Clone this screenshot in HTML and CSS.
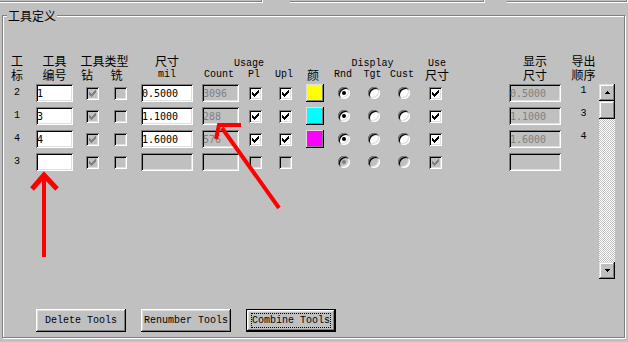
FILE: index.html
```html
<!DOCTYPE html>
<html lang="zh">
    <head>
        <meta charset="UTF-8" />
        <title>工具定义</title>
        <link rel="stylesheet" href="styles.css">
    </head>
    <body>
        <div class="topbar">
            <span class="seg seg-a"></span>
            <span class="seg seg-b"></span>
            <span class="seg seg-c"></span>
        </div>
        <div class="group">
            <div class="group-title">工具定义</div>
            <div class="tools">
                <div class="head head-a">
                    <span class="h c-lbl">工</span>
                    <span class="h c-num">工具</span>
                    <span class="h c-type">工具类型</span>
                    <span class="h c-size">尺寸</span>
                    <span class="h lat c-usage">Usage</span>
                    <span class="h lat c-display">Display</span>
                    <span class="h lat c-use">Use</span>
                    <span class="h c-disp">显示</span>
                    <span class="h c-order">导出</span>
                </div>
                <div class="head head-b">
                    <span class="h c-lbl">标</span>
                    <span class="h c-num">编号</span>
                    <span class="h c-drill">钻</span>
                    <span class="h c-mill">铣</span>
                    <span class="h lat c-size">mil</span>
                    <span class="h lat c-count">Count</span>
                    <span class="h lat c-pl">Pl</span>
                    <span class="h lat c-upl">Upl</span>
                    <span class="h c-color">颜</span>
                    <span class="h lat c-rnd">Rnd</span>
                    <span class="h lat c-tgt">Tgt</span>
                    <span class="h lat c-cust">Cust</span>
                    <span class="h c-use">尺寸</span>
                    <span class="h c-disp">尺寸</span>
                    <span class="h c-order">顺序</span>
                </div>

                <div class="row r1">
                    <span class="num c-lbl">2</span>
                    <input class="field c-num" value="1">
                    <span class="check dis c-drill"><svg viewBox="0 0 7 7" width="7" height="7"><path d="M0 2H1V3H2V4H3V3H4V2H5V1H6V0H7V3H6V4H5V5H4V6H3V7H2V6H1V5H0Z"/></svg></span>
                    <span class="check dis c-mill"></span>
                    <input class="field wide c-size" value="0.5000">
                    <input class="field c-count" value="3096" disabled>
                    <span class="check c-pl"><svg viewBox="0 0 7 7" width="7" height="7"><path d="M0 2H1V3H2V4H3V3H4V2H5V1H6V0H7V3H6V4H5V5H4V6H3V7H2V6H1V5H0Z"/></svg></span>
                    <span class="check c-upl"><svg viewBox="0 0 7 7" width="7" height="7"><path d="M0 2H1V3H2V4H3V3H4V2H5V1H6V0H7V3H6V4H5V5H4V6H3V7H2V6H1V5H0Z"/></svg></span>
                    <span class="swatch yellow c-color"></span>
                    <span class="radio on c-rnd"></span>
                    <span class="radio c-tgt"></span>
                    <span class="radio c-cust"></span>
                    <span class="check c-use"><svg viewBox="0 0 7 7" width="7" height="7"><path d="M0 2H1V3H2V4H3V3H4V2H5V1H6V0H7V3H6V4H5V5H4V6H3V7H2V6H1V5H0Z"/></svg></span>
                    <input class="field wide c-disp" value="0.5000" disabled>
                    <span class="order c-order">1</span>
                </div>
                <div class="row r2">
                    <span class="num c-lbl">1</span>
                    <input class="field c-num" value="3">
                    <span class="check dis c-drill"><svg viewBox="0 0 7 7" width="7" height="7"><path d="M0 2H1V3H2V4H3V3H4V2H5V1H6V0H7V3H6V4H5V5H4V6H3V7H2V6H1V5H0Z"/></svg></span>
                    <span class="check dis c-mill"></span>
                    <input class="field wide c-size" value="1.1000">
                    <input class="field c-count" value="288" disabled>
                    <span class="check c-pl"><svg viewBox="0 0 7 7" width="7" height="7"><path d="M0 2H1V3H2V4H3V3H4V2H5V1H6V0H7V3H6V4H5V5H4V6H3V7H2V6H1V5H0Z"/></svg></span>
                    <span class="check c-upl"><svg viewBox="0 0 7 7" width="7" height="7"><path d="M0 2H1V3H2V4H3V3H4V2H5V1H6V0H7V3H6V4H5V5H4V6H3V7H2V6H1V5H0Z"/></svg></span>
                    <span class="swatch cyan c-color"></span>
                    <span class="radio on c-rnd"></span>
                    <span class="radio c-tgt"></span>
                    <span class="radio c-cust"></span>
                    <span class="check c-use"><svg viewBox="0 0 7 7" width="7" height="7"><path d="M0 2H1V3H2V4H3V3H4V2H5V1H6V0H7V3H6V4H5V5H4V6H3V7H2V6H1V5H0Z"/></svg></span>
                    <input class="field wide c-disp" value="1.1000" disabled>
                    <span class="order c-order">3</span>
                </div>
                <div class="row r3">
                    <span class="num c-lbl">4</span>
                    <input class="field c-num" value="4">
                    <span class="check dis c-drill"><svg viewBox="0 0 7 7" width="7" height="7"><path d="M0 2H1V3H2V4H3V3H4V2H5V1H6V0H7V3H6V4H5V5H4V6H3V7H2V6H1V5H0Z"/></svg></span>
                    <span class="check dis c-mill"></span>
                    <input class="field wide c-size" value="1.6000">
                    <input class="field c-count" value="576" disabled>
                    <span class="check c-pl"><svg viewBox="0 0 7 7" width="7" height="7"><path d="M0 2H1V3H2V4H3V3H4V2H5V1H6V0H7V3H6V4H5V5H4V6H3V7H2V6H1V5H0Z"/></svg></span>
                    <span class="check c-upl"><svg viewBox="0 0 7 7" width="7" height="7"><path d="M0 2H1V3H2V4H3V3H4V2H5V1H6V0H7V3H6V4H5V5H4V6H3V7H2V6H1V5H0Z"/></svg></span>
                    <span class="swatch magenta c-color"></span>
                    <span class="radio on c-rnd"></span>
                    <span class="radio c-tgt"></span>
                    <span class="radio c-cust"></span>
                    <span class="check c-use"><svg viewBox="0 0 7 7" width="7" height="7"><path d="M0 2H1V3H2V4H3V3H4V2H5V1H6V0H7V3H6V4H5V5H4V6H3V7H2V6H1V5H0Z"/></svg></span>
                    <input class="field wide c-disp" value="1.6000" disabled>
                    <span class="order c-order">4</span>
                </div>
                <div class="row r4">
                    <span class="num c-lbl">3</span>
                    <input class="field c-num" value="">
                    <span class="check dis c-drill"><svg viewBox="0 0 7 7" width="7" height="7"><path d="M0 2H1V3H2V4H3V3H4V2H5V1H6V0H7V3H6V4H5V5H4V6H3V7H2V6H1V5H0Z"/></svg></span>
                    <span class="check dis c-mill"></span>
                    <input class="field wide c-size" value="" disabled>
                    <input class="field c-count" value="" disabled>
                    <span class="check dis c-pl"></span>
                    <span class="check dis c-upl"></span>
                    <span class="radio dis on c-rnd"></span>
                    <span class="radio dis c-tgt"></span>
                    <span class="radio dis c-cust"></span>
                    <span class="check dis c-use"><svg viewBox="0 0 7 7" width="7" height="7"><path d="M0 2H1V3H2V4H3V3H4V2H5V1H6V0H7V3H6V4H5V5H4V6H3V7H2V6H1V5H0Z"/></svg></span>
                    <input class="field wide c-disp" value="" disabled>
                </div>

                <div class="scroll c-scroll">
                    <span class="sb-btn"><svg viewBox="0 0 5 3" width="5" height="3"><path d="M2 0H3V1H4V2H5V3H0V2H1V1H2Z"/></svg></span>
                    <span class="sb-thumb"></span>
                    <span class="sb-track"></span>
                    <span class="sb-btn"><svg viewBox="0 0 5 3" width="5" height="3"><path d="M0 0H5V1H4V2H3V3H2V2H1V1H0Z"/></svg></span>
                </div>
            </div>

            <div class="actions">
                <button class="btn">Delete Tools</button>
                <button class="btn">Renumber Tools</button>
                <button class="btn btn-default"><span class="focus">Combine Tools</span></button>
            </div>
        </div>

        <!-- 빨간 화살표 표시 -->
        <svg class="marks" viewBox="0 0 628 342" width="628" height="342">
            <g stroke="#f00" fill="none">
                <path d="M44 257V178" stroke-width="4"/>
                <path d="M32 189L44 175L57 189" stroke-width="5"/>
                <path d="M279 208L222 128" stroke-width="4"/>
                <path d="M241 125H219L216 139" stroke-width="4"/>
            </g>
        </svg>
    </body>
</html>
```

FILE: styles.css
```css
* {
    box-sizing: border-box;
}
body {
    margin: 0;
    width: 628px;
    height: 342px;
    overflow: hidden;
    position: relative;
    background-color: #c0c0c0;
    font-family: "Liberation Mono", "DejaVu Sans Mono", monospace;
    font-size: 10px;
    color: #000;
}
.topbar {
    display: flex;
    height: 3px;
}
.seg {
    display: block;
    height: 3px;
    border-bottom: 1px solid #fff;
    border-right: 1px solid #fff;
    box-shadow: inset -1px -1px #808080;
}
.seg-a {
    width: 263px;
    margin-right: 27px;
}
.seg-b {
    width: 195px;
    margin-right: 22px;
}
.seg-c {
    flex: 1;
}
.group {
    margin: 12px 3px 0 2px;
    height: 323px;
    border: 1px solid #808080;
    box-shadow: inset 1px 1px #fff, 1px 1px #fff;
}
.group-title {
    width: fit-content;
    margin: -8px 0 0 4px;
    padding: 0 1px;
    background-color: #c0c0c0;
    font-family: "Noto Sans CJK SC", sans-serif;
    font-size: 12px;
    line-height: 15px;
}
.tools {
    display: grid;
    margin: 30px 0 0 1px;
    grid-template-columns:
        [lbl] 26px 6px [num] 37px 13px [drill] 13px 15px [mill] 13px 14px
        [size] 52px 9px [count] 37px 10px [pl] 13px 17px [upl] 13px 14px
        [color] 18px 14px [rnd] 12px 18px [tgt] 12px 18px [cust] 12px 19px
        [use] 13px 67px [disp] 52px 11px [order] 23px 4px [scroll] 16px;
    grid-template-rows: 14px 17px repeat(4, 23px) auto;
}
.head,
.row {
    display: contents;
}
.h {
    justify-self: center;
    line-height: 13px;
    font-family: "Noto Sans CJK SC", sans-serif;
    font-size: 12px;
    white-space: nowrap;
}
.h.lat {
    font-family: "Liberation Mono", monospace;
    font-size: 10px;
}
.head-a > .h {
    grid-row: 1;
    align-self: end;
}
.head-a > .h.lat {
    margin-bottom: -3px;
}
.head-b > .h {
    grid-row: 2;
    align-self: start;
    margin-top: 1px;
}
.r1 > * { grid-row: 3; }
.r2 > * { grid-row: 4; }
.r3 > * { grid-row: 5; }
.r4 > * { grid-row: 6; }
.row > * {
    align-self: start;
}

/* columns */
.c-lbl { grid-column: lbl / span 1; }
.c-num { grid-column: num / span 1; }
.c-drill { grid-column: drill / span 1; }
.c-mill { grid-column: mill / span 1; }
.c-type { grid-column: drill / span 3; }
.c-size { grid-column: size / span 1; }
.c-count { grid-column: count / span 1; }
.c-usage { grid-column: count / span 5; }
.c-pl { grid-column: pl / span 1; }
.c-upl { grid-column: upl / span 1; }
.c-color { grid-column: color / span 1; }
.c-rnd { grid-column: rnd / span 1; }
.c-tgt { grid-column: tgt / span 1; }
.c-cust { grid-column: cust / span 1; }
.c-display { grid-column: rnd / span 5; }
.c-use { grid-column: use / span 1; }
.c-disp { grid-column: disp / span 1; }
.c-order { grid-column: order / span 1; }
.c-scroll { grid-column: scroll / span 1; }

/* header nudges */
.h.c-type { padding-right: 4px; }
.h.c-usage { padding-left: 4px; }
.h.c-display { padding-right: 3px; }
.h.c-drill { padding-right: 11px; }
.h.c-mill { padding-right: 8px; }
.h.c-count,
.h.c-pl,
.h.c-upl,
.h.c-tgt { padding-right: 3px; }
.h.c-color,
.h.c-cust { padding-right: 4px; }
.h.c-rnd { padding-right: 2px; }
.h.c-use { padding-left: 3px; }

.num {
    justify-self: center;
    line-height: 18px;
}
.order {
    justify-self: center;
    line-height: 14px;
}
.field {
    width: 37px;
    height: 18px;
    margin: 0;
    border: 0;
    padding: 0 0 0 1px;
    outline: none;
    background-color: #fff;
    font-family: "DejaVu Sans Mono", monospace;
    font-size: 10px;
    color: #000;
    box-shadow: inset 1px 1px #808080, inset -1px -1px #fff, inset 2px 2px #000, inset -2px -2px #dfdfdf;
}
.field.wide {
    width: 52px;
}
.field:disabled {
    background-color: #c0c0c0;
    color: #808080;
}
.check {
    display: flex;
    justify-content: center;
    align-items: center;
    width: 13px;
    height: 13px;
    margin-top: 3px;
    background-color: #fff;
    color: #000;
    box-shadow: inset 1px 1px #808080, inset -1px -1px #fff, inset 2px 2px #000, inset -2px -2px #dfdfdf;
}
.check.dis {
    background-color: #c0c0c0;
    color: #808080;
}
.check svg {
    display: block;
    fill: currentColor;
    shape-rendering: crispEdges;
}
.radio {
    display: block;
    width: 12px;
    height: 12px;
    margin-top: 3px;
    border-radius: 50%;
    background-color: #fff;
    box-shadow: inset 1px 1px #808080, inset -1px -1px #fff, inset 2px 2px #000, inset -2px -2px #dfdfdf;
}
.radio.on::after {
    content: "";
    display: block;
    width: 4px;
    height: 4px;
    margin: 4px;
    border-radius: 50%;
    background-color: #000;
}
.radio.dis {
    background-color: #c0c0c0;
}
.radio.dis.on::after {
    background-color: #808080;
}
.swatch {
    display: block;
    width: 18px;
    height: 18px;
    box-shadow: inset -1px -1px #000, inset 1px 1px #dfdfdf, inset -2px -2px #808080;
}
.yellow { background-color: #ffff00; }
.cyan { background-color: #00ffff; }
.magenta { background-color: #ff00ff; }

.scroll {
    grid-row: 3 / 8;
    height: 195px;
    display: flex;
    flex-direction: column;
    background: repeating-conic-gradient(#c0c0c0 0% 25%, #fff 0% 50%) 0 0 / 2px 2px;
}
.sb-btn,
.sb-thumb {
    display: flex;
    justify-content: center;
    align-items: center;
    background-color: #c0c0c0;
    box-shadow: inset -1px -1px #000, inset 1px 1px #dfdfdf, inset -2px -2px #808080, inset 2px 2px #fff;
}
.sb-btn {
    height: 17px;
}
.sb-thumb {
    height: 18px;
}
.sb-track {
    flex: 1;
}
.sb-btn svg {
    display: block;
    fill: #000;
    shape-rendering: crispEdges;
}

.actions {
    display: flex;
    gap: 15px;
    margin: 30px 0 0 33px;
}
.btn {
    all: unset;
    display: flex;
    justify-content: center;
    align-items: center;
    width: 90px;
    height: 23px;
    background-color: #c0c0c0;
    font-family: "Liberation Mono", monospace;
    font-size: 10px;
    line-height: 13px;
    color: #000;
    box-shadow: inset -1px -1px #000, inset 1px 1px #fff, inset -2px -2px #808080, inset 2px 2px #dfdfdf;
}
.btn-default {
    box-shadow: inset 0 0 0 1px #000, inset -2px -2px #000, inset 2px 2px #fff, inset -3px -3px #808080, inset 3px 3px #dfdfdf;
}
.focus {
    border: 1px dotted #000;
    line-height: 13px;
}
.marks {
    position: absolute;
    left: 0;
    top: 0;
    pointer-events: none;
}
```
